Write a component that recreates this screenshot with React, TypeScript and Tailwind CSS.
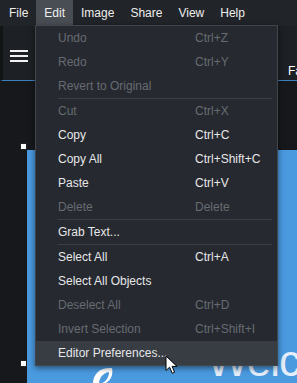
import React from "react";

type Item = { label: string; shortcut?: string; disabled?: boolean; hover?: boolean } | "sep";

const editItems: Item[] = [
  { label: "Undo", shortcut: "Ctrl+Z", disabled: true },
  { label: "Redo", shortcut: "Ctrl+Y", disabled: true },
  { label: "Revert to Original", disabled: true },
  "sep",
  { label: "Cut", shortcut: "Ctrl+X", disabled: true },
  { label: "Copy", shortcut: "Ctrl+C" },
  { label: "Copy All", shortcut: "Ctrl+Shift+C" },
  { label: "Paste", shortcut: "Ctrl+V" },
  { label: "Delete", shortcut: "Delete", disabled: true },
  "sep",
  { label: "Grab Text..." },
  "sep",
  { label: "Select All", shortcut: "Ctrl+A" },
  { label: "Select All Objects" },
  { label: "Deselect All", shortcut: "Ctrl+D", disabled: true },
  { label: "Invert Selection", shortcut: "Ctrl+Shift+I", disabled: true },
  { label: "Editor Preferences...", hover: true },
];

const menus = ["File", "Edit", "Image", "Share", "View", "Help"];

function Cursor() {
  return (
    <svg width="14" height="20" viewBox="0 0 14 20" className="absolute left-[165px] top-[355px]">
      <path
        d="M1 1 L1 15.5 L4.6 12.2 L7.2 18.2 L9.6 17.2 L7.1 11.4 L12 11.4 Z"
        fill="#ffffff"
        stroke="#000000"
        strokeWidth="1"
        strokeLinejoin="round"
      />
    </svg>
  );
}

function EditMenu() {
  return (
    <div className="absolute left-[35px] top-[25px] w-[243px] bg-[#26292f] border border-[#42464d] shadow-[0_2px_6px_rgba(0,0,0,0.5)]">
      {editItems.map((item, i) => {
        if (item === "sep") {
          return <div key={i} className="h-px ml-[22px] mr-[5px] bg-[#3a3e45]" />;
        }
        return (
          <div
            key={i}
            className={`h-[24px] flex items-center pl-[22px] text-[12px] ${
              item.hover ? "bg-[#383c43]" : ""
            } ${item.disabled ? "text-[#676b72]" : "text-[#e6e7e9]"}`}
          >
            <span className="w-[137px] whitespace-nowrap">{item.label}</span>
            {item.shortcut && <span className="whitespace-nowrap">{item.shortcut}</span>}
          </div>
        );
      })}
    </div>
  );
}

export default function App() {
  return (
    <div
      className="relative w-[297px] h-[383px] overflow-hidden bg-[#16181b] flex flex-col"
      style={{ fontFamily: '"Liberation Sans", Arial, sans-serif' }}
    >
      {/* Menu bar */}
      <div className="h-[26px] flex items-stretch bg-[#212428] pl-px text-[12px] text-[#eeeeee]">
        {menus.map((m) => (
          <div
            key={m}
            className={`flex items-center px-[8px] ${m === "Edit" ? "bg-[#494d54]" : ""}`}
          >
            {m}
          </div>
        ))}
      </div>

      {/* Toolbar */}
      <div className="h-[55px] flex items-center bg-[#1d2024] border-b border-[#3c80c2] border-l-[3px] border-l-[#131416]">
        <div className="ml-[7px] mt-[6px] flex flex-col gap-[3px]">
          <div className="w-[18px] h-[2px] bg-[#f2f2f2]" />
          <div className="w-[18px] h-[2px] bg-[#f2f2f2]" />
          <div className="w-[18px] h-[2px] bg-[#f2f2f2]" />
        </div>
        <div className="ml-[260px] self-end mb-0 text-[12px] text-white whitespace-nowrap">
          Favorites
        </div>
      </div>

      {/* Canvas area */}
      <div className="flex-1 flex pt-[69px] pl-[27px] bg-[#16181b]">
        <div className="flex-1 bg-[#4a9ae0] relative overflow-hidden">
          <svg width="26" height="24" viewBox="0 0 26 24" className="absolute left-[63px] top-[214px]">
            <path d="M3 22 C2 10 10 3 22 4 C24 14 18 22 3 22 Z" fill="#ffffff" />
            <path d="M9 20 C9 14 13 9 19 8 C19 14 15 19 9 20 Z" fill="#4a9ae0" />
          </svg>
          <div className="absolute left-[180px] top-[189px] text-[44px] leading-none text-[#e4effb] whitespace-nowrap tracking-[-1px]">
            Welcome
          </div>
        </div>
      </div>

      {/* Selection handles */}
      <div className="absolute left-[20px] top-[143px] w-[7px] h-[7px] bg-white border border-[#222]" />
      <div className="absolute left-[20px] top-[360px] w-[7px] h-[7px] bg-white border border-[#222]" />

      <EditMenu />
      <Cursor />
    </div>
  );
}
